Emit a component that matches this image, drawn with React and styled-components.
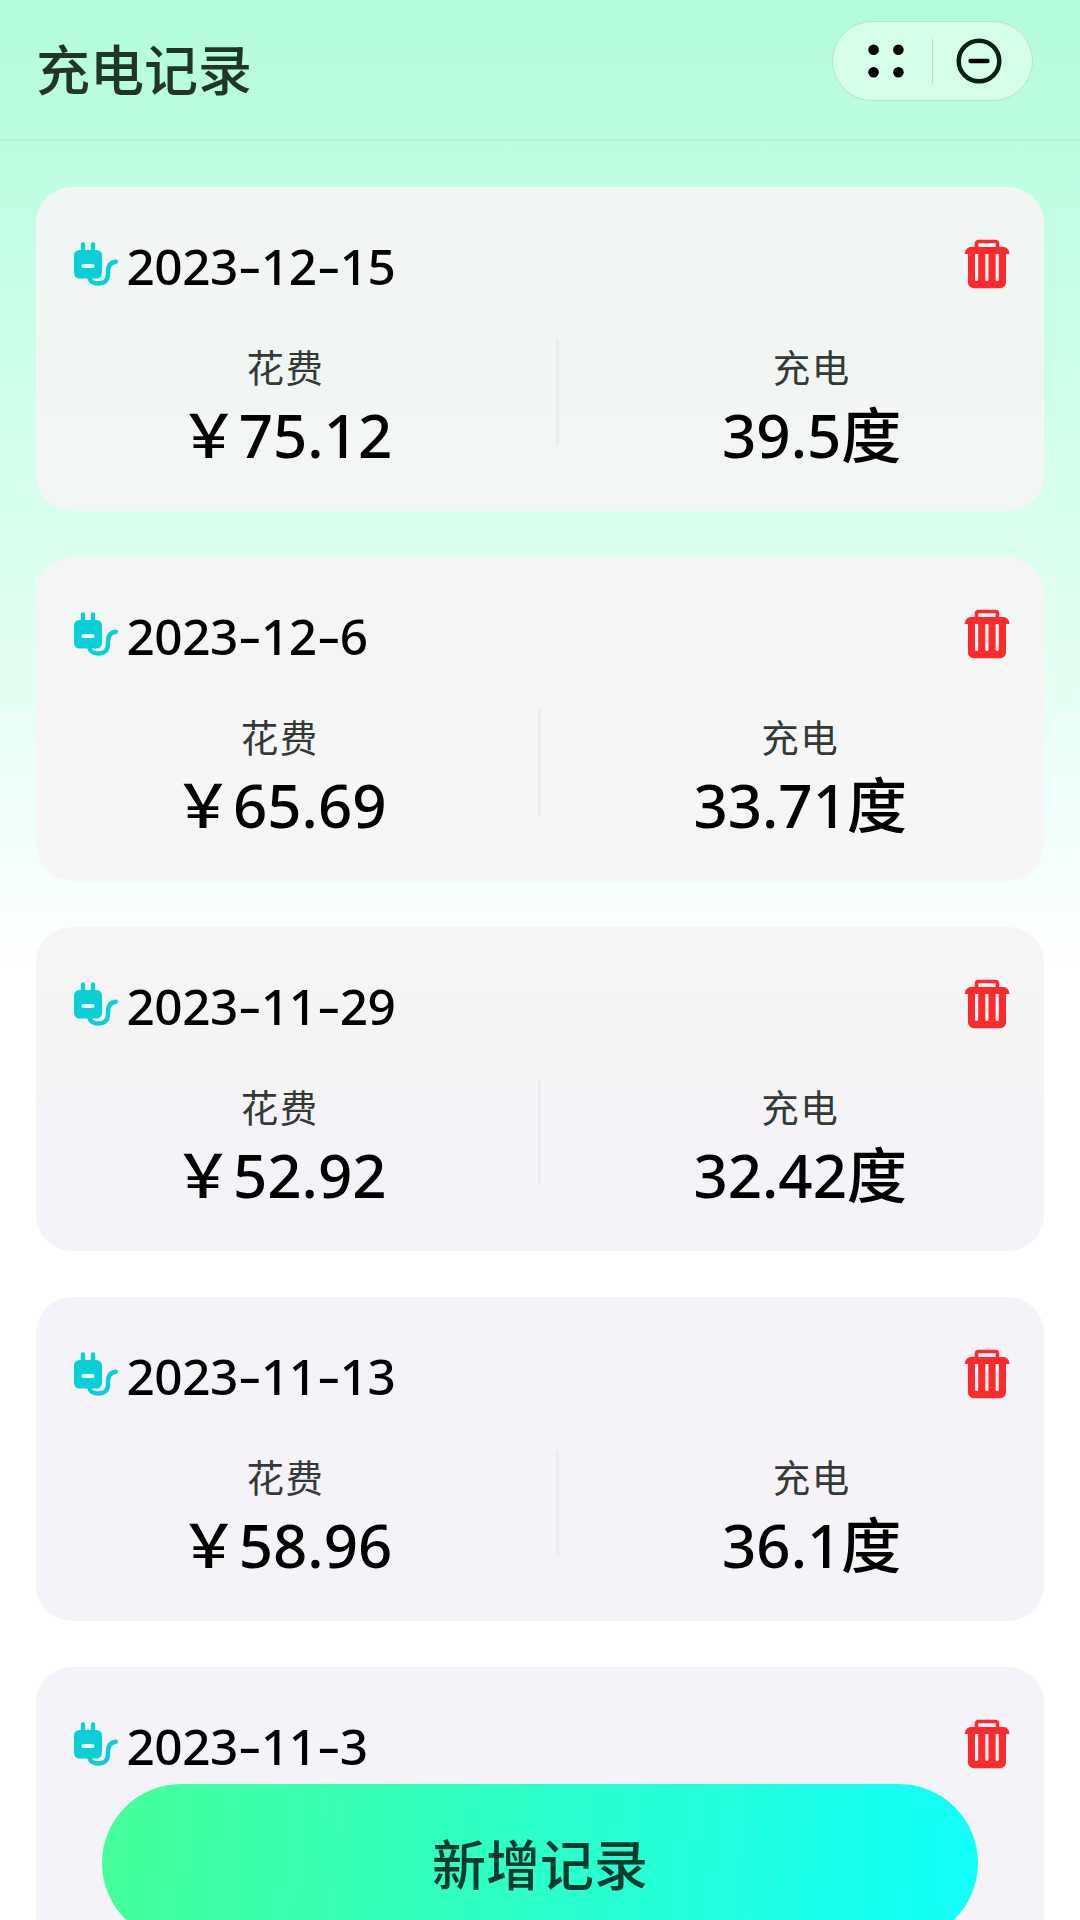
import React from 'react';
import styled, { createGlobalStyle } from 'styled-components';

const GlobalStyle = createGlobalStyle`
  * {
    box-sizing: border-box;
  }
  body {
    margin: 0;
    font-family: 'Noto Sans', 'Noto Sans CJK SC', sans-serif;
  }
`;

const Page = styled.div`
  width: 1080px;
  height: 1920px;
  overflow: hidden;
  background: linear-gradient(180deg, #b3fddc 0, #bdfee1 150px, #d9ffee 540px, #f4fffa 860px, #ffffff 980px);
`;

// 顶部导航
const Header = styled.header`
  display: flex;
  justify-content: space-between;
  align-items: flex-start;
  height: 141px;
  padding: 21px 47px 0 36px;
  border-bottom: 2px solid #b5f1d7;
`;

const Title = styled.h1`
  margin: 7px 0 0;
  font-family: 'Noto Sans CJK SC', sans-serif;
  font-size: 54px;
  font-weight: 500;
  line-height: 80px;
  color: #1f3629;
`;

const Capsule = styled.div`
  display: flex;
  align-items: center;
  width: 201px;
  height: 80px;
  border: 1px solid #b2e6cd;
  border-radius: 40px;
  background: #d6ffea;
`;

const CapsuleButton = styled.button`
  display: flex;
  align-items: center;
  justify-content: center;
  flex: 1;
  padding: ${props => (props.$side === 'left' ? '0 0 0 7px' : '0 7px 0 0')};
  border: 0;
  background: none;
`;

const CapsuleLine = styled.div`
  width: 1px;
  height: 44px;
  background: #b4dcc9;
`;

// 记录列表
const List = styled.main`
  display: flex;
  flex-direction: column;
  gap: 46px;
  padding: 46px 36px 0;
`;

const cardTones = {
  mint: 'rgba(246, 245, 245, 0.88)',
  fade: 'linear-gradient(180deg, #f5f6f4, #f5f3f7 60%)',
  plain: '#f5f3f7',
};

const Card = styled.section`
  flex: none;
  height: 324px;
  padding: 46px 33px 0 36px;
  border-radius: 36px;
  background: ${props => cardTones[props.$tone]};
`;

const CardHead = styled.div`
  display: flex;
  align-items: center;
  height: 64px;
`;

const DateText = styled.div`
  flex: 1;
  margin: 2px 0 0 6.5px;
  font-size: 49.5px;
  font-weight: 500;
  letter-spacing: -0.45px;
  line-height: 64px;
  color: #000;
`;

const Dash = styled.span`
  display: inline-block;
  width: 23px;
  text-align: center;
  transform: scale(1.45, 0.9);
`;

const Stats = styled.div`
  display: flex;
  justify-content: space-around;
  width: 886px;
  margin: 41px 0 0 25px;
`;

const Stat = styled.div`
  display: flex;
  flex-direction: column;
  align-items: center;
`;

const Label = styled.div`
  font-family: 'Noto Sans CJK SC', sans-serif;
  font-size: 37.5px;
  letter-spacing: 1.5px;
  line-height: 56px;
  color: #333a36;
`;

const Value = styled.div`
  margin-top: 1px;
  font-size: 60px;
  font-weight: 500;
  line-height: 80px;
  color: #000;
`;

const StatLine = styled.div`
  width: 3px;
  height: 105px;
  margin-top: 2px;
  background: #e9edee;
`;

const AddButton = styled.button`
  position: fixed;
  left: 102px;
  top: 1784px;
  width: 876px;
  height: 158px;
  padding: 0 0 1px;
  border: 0;
  border-radius: 79px;
  background: linear-gradient(95deg, #45ff99, #12fffb);
  font-family: 'Noto Sans CJK SC', sans-serif;
  font-size: 54px;
  font-weight: 500;
  color: #0a3c2e;
`;

const DotsIcon = () => (
  <svg width="38" height="36" viewBox="0 0 38 36">
    <circle cx="6.6" cy="6.8" r="5.3" />
    <circle cx="31.4" cy="6.8" r="5.3" />
    <circle cx="6.6" cy="29.2" r="5.3" />
    <circle cx="31.4" cy="29.2" r="5.3" />
  </svg>
);

const MinusIcon = () => (
  <svg width="46" height="46" viewBox="0 0 46 46" fill="none" stroke="#0a1f15" strokeWidth="4.5">
    <circle cx="23" cy="23" r="20.3" />
    <path d="M14.6 23h16.8" stroke="#000" strokeLinecap="round" />
  </svg>
);

const PlugIcon = () => (
  <svg width="48" height="48" viewBox="0 0 48 48" fill="none" stroke="#0acfd6" strokeWidth="4.4" strokeLinecap="round">
    <rect x="2" y="9" width="28" height="28.5" rx="5.5" fill="#0acfd6" stroke="none" />
    <path d="M11 3.5v9M21 3.5v9" />
    <path d="M17.3 36.5c.5 3.5 4 6 9 6 6.5 0 9.7-3.5 9.7-9v-3c0-6 2.5-9.3 7.8-9.8" />
    <path d="M11.6 25h8.8" stroke="#eefaf8" strokeWidth="4.2" />
  </svg>
);

const TrashIcon = () => (
  <svg width="47" height="52" viewBox="0 0 47 52" fill="#fb2a2c">
    <path d="M12.5 9V4.5a2 2 0 0 1 2-2h17a2 2 0 0 1 2 2V9" fill="none" stroke="#fb2a2c" strokeWidth="3.6" />
    <path d="M6 8h34.5q4.7 1.3 5 7H.7Q1 9.3 6 8z" />
    <path
      fillRule="evenodd"
      d="M4 14h38v29.5a5.8 5.8 0 0 1-5.8 5.8H9.8A5.8 5.8 0 0 1 4 43.5zM11 15v25.5a1.6 1.6 0 0 0 3.2 0V15zM21.3 15v25.5a1.6 1.6 0 0 0 3.2 0V15zM31.6 15v25.5a1.6 1.6 0 0 0 3.2 0V15z"
    />
  </svg>
);

const records = [
  { date: '2023-12-15', cost: '75.12', power: '39.5', tone: 'mint' },
  { date: '2023-12-6', cost: '65.69', power: '33.71', tone: 'mint' },
  { date: '2023-11-29', cost: '52.92', power: '32.42', tone: 'fade' },
  { date: '2023-11-13', cost: '58.96', power: '36.1', tone: 'plain' },
  { date: '2023-11-3', cost: '', power: '', tone: 'plain' },
];

function Record({ date, cost, power, tone }) {
  const [year, month, day] = date.split('-');
  return (
    <Card $tone={tone}>
      <CardHead>
        <PlugIcon />
        <DateText>
          {year}<Dash>-</Dash>{month}<Dash>-</Dash>{day}
        </DateText>
        <TrashIcon />
      </CardHead>
      {cost && (
        <Stats>
          <Stat>
            <Label>花费</Label>
            <Value>￥{cost}</Value>
          </Stat>
          <StatLine />
          <Stat>
            <Label>充电</Label>
            <Value>{power}度</Value>
          </Stat>
        </Stats>
      )}
    </Card>
  );
}

function App() {
  return (
    <Page>
      <GlobalStyle />
      <Header>
        <Title>充电记录</Title>
        <Capsule>
          <CapsuleButton $side="left"><DotsIcon /></CapsuleButton>
          <CapsuleLine />
          <CapsuleButton $side="right"><MinusIcon /></CapsuleButton>
        </Capsule>
      </Header>
      <List>
        {records.map(record => (
          <Record key={record.date} {...record} />
        ))}
      </List>
      <AddButton>新增记录</AddButton>
    </Page>
  );
}

export default App;
